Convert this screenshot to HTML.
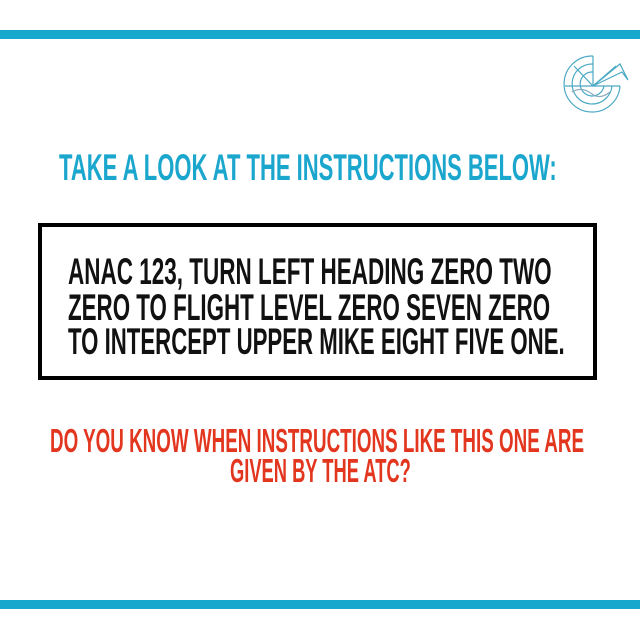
<!DOCTYPE html>
<html><head><meta charset="utf-8"><style>
html,body{margin:0;padding:0;background:#fff;}
body{width:640px;height:640px;position:relative;overflow:hidden;font-family:"Liberation Sans Narrow","Liberation Sans",sans-serif;font-weight:bold;}
.bar{position:absolute;left:0;width:640px;height:9px;background:#17a9cd;}
.t{position:absolute;white-space:nowrap;line-height:1;transform-origin:0 0;}
.box{position:absolute;left:38px;top:223px;width:551px;height:149px;border:4px solid #000;}
</style></head><body>
<div class="bar" style="top:30px"></div>
<div class="bar" style="top:600px"></div>
<svg style="position:absolute;left:560px;top:52px" width="72" height="62" viewBox="0 0 72 62" fill="none" stroke="#4aa9c4" stroke-width="1.2">
<path d="M33 4 A28 28 0 1 0 60 34"/>
<path d="M33 12 A20 20 0 1 0 52 34"/>
<path d="M33 20 A12 12 0 1 0 44 34"/>
<path d="M33 4 V34 M5 34 H60 M14 14 L33 34 L56 14"/>
<path d="M33 34 L60 12 L68 28 L62 20 Z"/>
<path d="M12 40 q10 -6 20 2 q8 6 18 -2" stroke="#8ab"/>
</svg>
<div class="t" style="left:59px;top:149px;font-size:37px;color:#1aa6cd;transform:scaleX(0.595)">TAKE A LOOK AT THE INSTRUCTIONS BELOW:</div>
<div class="box"></div>
<div class="t" style="left:68px;top:253px;font-size:37px;color:#111;transform:scaleX(0.608)">ANAC 123, TURN LEFT HEADING ZERO TWO</div>
<div class="t" style="left:68px;top:289px;font-size:37px;color:#111;transform:scaleX(0.604)">ZERO TO FLIGHT LEVEL ZERO SEVEN ZERO</div>
<div class="t" style="left:68px;top:323px;font-size:37px;color:#111;transform:scaleX(0.6)">TO INTERCEPT UPPER MIKE EIGHT FIVE ONE.</div>
<div class="t" style="left:50px;top:424px;font-size:33px;color:#e2361f;transform:scaleX(0.57)">DO YOU KNOW WHEN INSTRUCTIONS LIKE THIS ONE ARE</div>
<div class="t" style="left:230px;top:454px;font-size:33px;color:#e2361f;transform:scaleX(0.555)">GIVEN BY THE ATC?</div>
</body></html>
